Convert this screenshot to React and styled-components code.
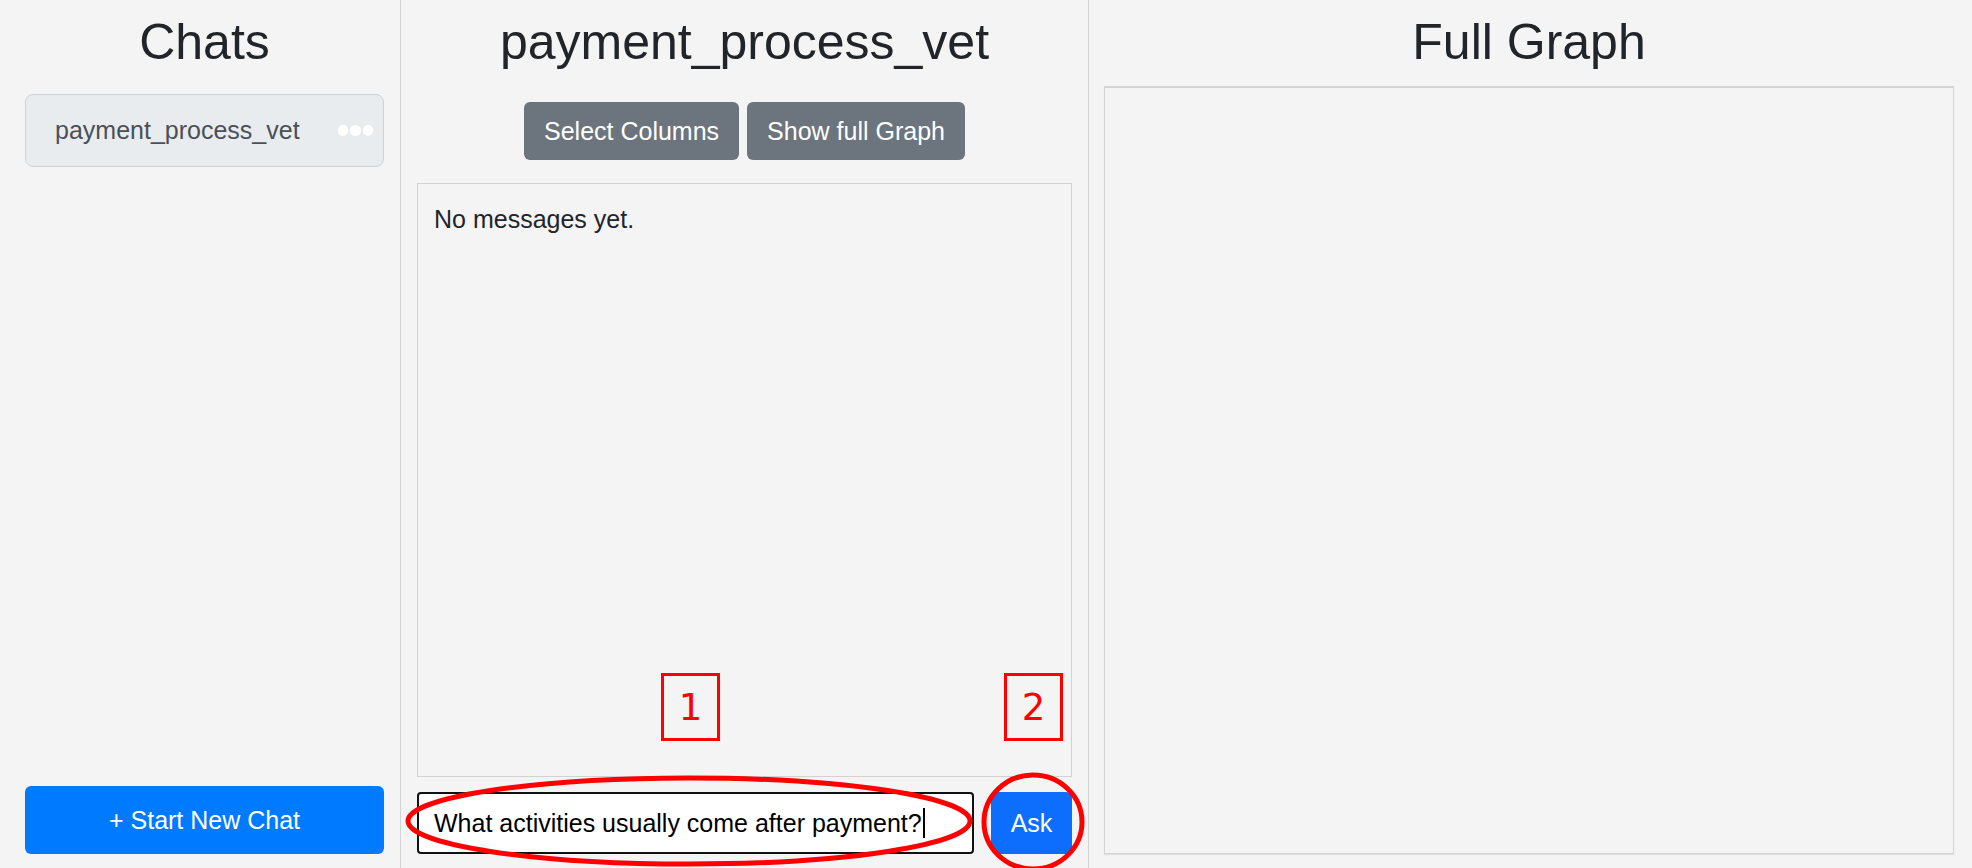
import React from 'react';
import styled, {createGlobalStyle} from 'styled-components';

const GlobalStyle = createGlobalStyle`
  html, body {
    margin: 0;
    padding: 0;
    background: #f4f4f4;
    font-family: 'Liberation Sans', Arial, sans-serif;
  }
  * { box-sizing: border-box; }
`;

const Page = styled.div`
  position: relative;
  display: flex;
  width: 100%;
  height: 868px;
  overflow: hidden;
  background: #f4f4f4;
`;

const Column = styled.div`
  display: flex;
  flex-direction: column;
  height: 100%;
  width: ${p => p.$width ? `${p.$width}px` : 'auto'};
  flex: ${p => p.$width ? '0 0 auto' : '1 1 auto'};
  padding: ${p => p.$pad};
  border-right: ${p => p.$divider ? '1px solid #d3d3d3' : 'none'};
`;

const Title = styled.h1`
  margin: 12px 0 0;
  font-size: 50px;
  line-height: 60px;
  font-weight: 400;
  color: #212529;
  text-align: center;
  white-space: nowrap;
`;

const ChatItem = styled.div`
  margin-top: 22px;
  height: 73px;
  display: flex;
  align-items: center;
  justify-content: space-between;
  padding: 0 10px 0 29px;
  background: #e9ecef;
  border: 1px solid #cfd3d6;
  border-radius: 8px;
  font-size: 25px;
  color: #495057;
`;

const Dots = styled.div`
  display: flex;
  gap: 2px;
  span {
    width: 10.5px;
    height: 10.5px;
    border-radius: 50%;
    background: #fff;
  }
`;

const Spacer = styled.div`
  flex: 1;
`;

const NewChatButton = styled.button`
  height: 68px;
  border: none;
  border-radius: 6px;
  background: #007bff;
  color: #fff;
  font-family: inherit;
  font-size: 25px;
  cursor: pointer;
`;

const ButtonRow = styled.div`
  margin-top: 30px;
  display: flex;
  justify-content: center;
  gap: 8px;
`;

const GreyButton = styled.button`
  height: 58px;
  padding: 0 20px;
  border: none;
  border-radius: 6px;
  background: #6c757d;
  color: #fff;
  font-family: inherit;
  font-size: 25px;
`;

const MessageBox = styled.div`
  margin-top: 23px;
  flex: 1;
  border: 1px solid #d2d2d2;
  padding: 17px 16px;
  font-size: 25px;
  line-height: 37.5px;
  color: #212529;
`;

const InputRow = styled.div`
  margin-top: 15px;
  display: flex;
  gap: 17px;
  height: 62px;
`;

const InputBox = styled.div`
  flex: 1;
  display: flex;
  align-items: center;
  padding: 0 15px;
  background: #fff;
  border: 2px solid #111;
  border-radius: 4px;
  font-size: 25px;
  color: #000;
  white-space: nowrap;
`;

const Caret = styled.span`
  display: inline-block;
  width: 2px;
  height: 30px;
  margin-left: 1px;
  background: #000;
`;

const AskButton = styled.button`
  width: 81px;
  border: none;
  border-radius: 6px;
  background: #0d6efd;
  color: #fff;
  font-family: inherit;
  font-size: 25px;
`;

const GraphBox = styled.div`
  margin-top: 14px;
  flex: 1;
  border: 1px solid #d4d4d4;
  border-top-width: 2px;
  box-shadow: 0 1px 1px rgba(0, 0, 0, 0.08);
`;

const NumberTag = styled.div`
  position: absolute;
  left: ${p => p.$x}px;
  top: ${p => p.$y}px;
  width: 59px;
  height: 68px;
  border: 3px solid #ff0000;
  display: flex;
  align-items: center;
  justify-content: center;
  color: #ff0000;
  font-family: 'DejaVu Sans', sans-serif;
  font-size: 37px;
  pointer-events: none;
`;

const Marks = styled.svg`
  position: absolute;
  left: 0;
  top: 0;
  pointer-events: none;
`;

export default function App() {
  return (
    <>
      <GlobalStyle />
      <Page>
        <Column $width={401} $pad="0 16px 14px 25px" $divider>
          <Title>Chats</Title>
          <ChatItem>
            <span>payment_process_vet</span>
            <Dots><span /><span /><span /></Dots>
          </ChatItem>
          <Spacer />
          <NewChatButton>+ Start New Chat</NewChatButton>
        </Column>

        <Column $width={688} $pad="0 16px 14px 16px" $divider>
          <Title>payment_process_vet</Title>
          <ButtonRow>
            <GreyButton>Select Columns</GreyButton>
            <GreyButton>Show full Graph</GreyButton>
          </ButtonRow>
          <MessageBox>No messages yet.</MessageBox>
          <InputRow>
            <InputBox>
              What activities usually come after payment?<Caret />
            </InputBox>
            <AskButton>Ask</AskButton>
          </InputRow>
        </Column>

        <Column $pad="0 18px 14px 15px">
          <Title>Full Graph</Title>
          <GraphBox />
        </Column>

        <NumberTag $x={661} $y={673}>1</NumberTag>
        <NumberTag $x={1004} $y={673}>2</NumberTag>
        <Marks width="1972" height="868">
          <ellipse cx="689" cy="821" rx="281" ry="43" fill="none" stroke="#ff0000" strokeWidth="5" />
          <ellipse cx="1033" cy="822" rx="49" ry="47" fill="none" stroke="#ff0000" strokeWidth="5" />
        </Marks>
      </Page>
    </>
  );
}
